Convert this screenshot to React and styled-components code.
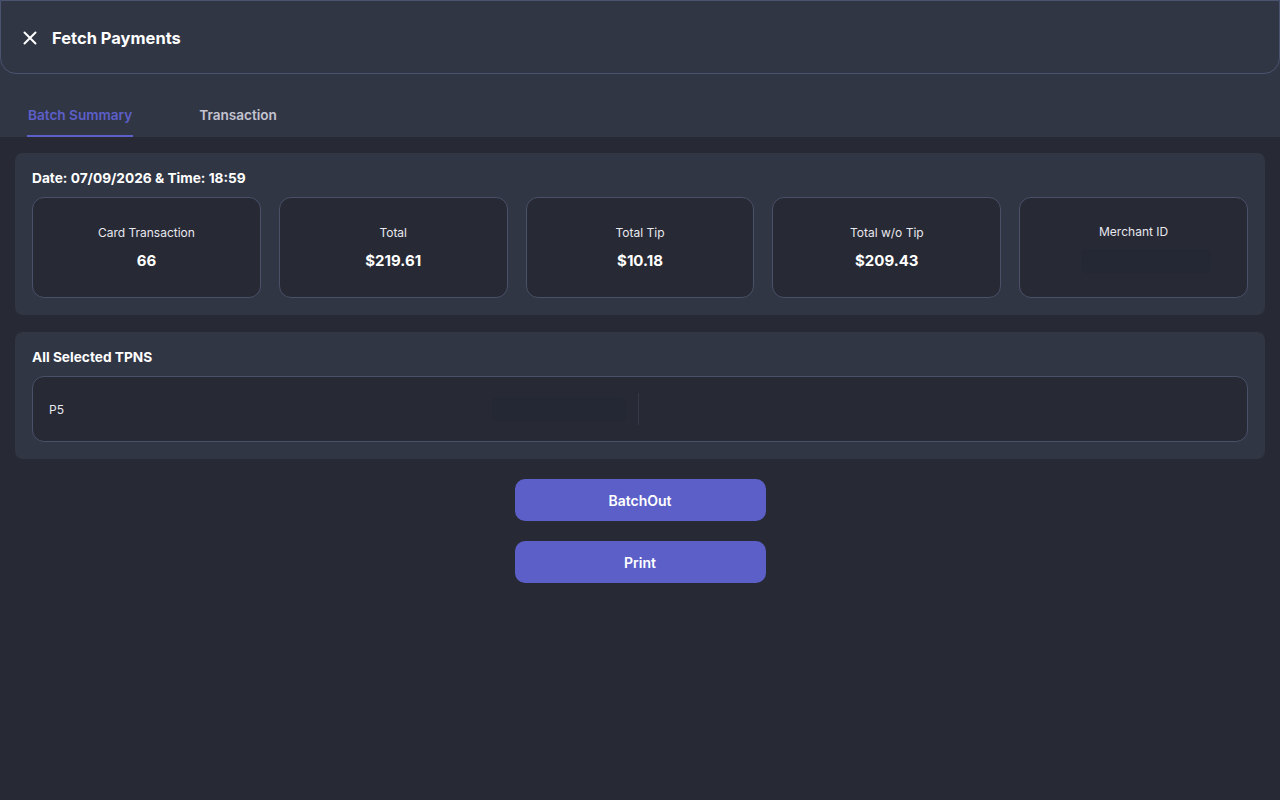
import React, { useState } from "react";
import styled, { createGlobalStyle } from "styled-components";

const GlobalStyle = createGlobalStyle`
  html, body {
    margin: 0;
    padding: 0;
    background: #272934;
    font-family: Inter, "Noto Sans", sans-serif;
    color: #ffffff;
  }
  * { box-sizing: border-box; }
`;

const stats = [
  { label: "Card Transaction", value: "66" },
  { label: "Total", value: "$219.61" },
  { label: "Total Tip", value: "$10.18" },
  { label: "Total w/o Tip", value: "$209.43" },
  { label: "Merchant ID", value: null },
];

function App() {
  const [tab, setTab] = useState("summary");

  return (
    <Page>
      <GlobalStyle />
      <TopArea>
        <Header>
          <CloseButton aria-label="close">
            <svg width="16" height="16" viewBox="0 0 16 16">
              <path d="M2.5 2.5 L13.5 13.5 M13.5 2.5 L2.5 13.5" stroke="#fff" strokeWidth="2" strokeLinecap="round" />
            </svg>
          </CloseButton>
          <Title>Fetch Payments</Title>
        </Header>
        <Tabs>
          <Tab active={tab === "summary"} onClick={() => setTab("summary")}>
            Batch Summary
          </Tab>
          <Tab active={tab === "transaction"} onClick={() => setTab("transaction")}>
            Transaction
          </Tab>
        </Tabs>
      </TopArea>

      <Content>
        <Panel>
          <PanelTitle>Date: 07/09/2026 &amp; Time: 18:59</PanelTitle>
          <StatGrid>
            {stats.map((s) => (
              <StatBox key={s.label}>
                <StatLabel>{s.label}</StatLabel>
                {s.value ? <StatValue>{s.value}</StatValue> : <Skeleton width={130} offset={24} />}
              </StatBox>
            ))}
          </StatGrid>
        </Panel>

        <Panel>
          <PanelTitle>All Selected TPNS</PanelTitle>
          <TpnRow>
            <TpnName>P5</TpnName>
            <TpnMid>
              <Skeleton width={134} />
              <Divider />
            </TpnMid>
          </TpnRow>
        </Panel>

        <Actions>
          <PrimaryButton>BatchOut</PrimaryButton>
          <PrimaryButton>Print</PrimaryButton>
        </Actions>
      </Content>
    </Page>
  );
}

const Page = styled.div`
  min-height: 800px;
  background: #272934;
`;

const TopArea = styled.div`
  background: #313645;
`;

const Header = styled.header`
  height: 74px;
  display: flex;
  align-items: center;
  gap: 14px;
  padding: 2px 20px 0 21px;
  border: 1px solid #4a5370;
  border-radius: 0 0 16px 16px;
`;

const CloseButton = styled.button`
  background: none;
  border: none;
  padding: 0;
  width: 16px;
  height: 16px;
  display: flex;
  cursor: pointer;
`;

const Title = styled.h1`
  margin: 0;
  font-size: 16.5px;
  font-weight: 700;
  color: #ffffff;
`;

const Tabs = styled.nav`
  display: flex;
  gap: 65px;
  padding: 0 27px;
  height: 63px;
  align-items: flex-end;
`;

const Tab = styled.button`
  background: none;
  border: none;
  padding: 0 1px 12px;
  font-family: inherit;
  font-size: 13.6px;
  font-weight: 600;
  color: ${(p) => (p.active ? "#5d5fc9" : "#c4c4d0")};
  border-bottom: 2px solid ${(p) => (p.active ? "#5d5fc9" : "transparent")};
  cursor: pointer;
`;

const Content = styled.main`
  padding: 16px 15px;
  display: flex;
  flex-direction: column;
  gap: 17px;
`;

const Panel = styled.section`
  background: #313645;
  border-radius: 8px;
  padding: 16px 17px 17px;
  display: flex;
  flex-direction: column;
  gap: 10px;
`;

const PanelTitle = styled.h2`
  margin: 0;
  font-size: 13.7px;
  font-weight: 700;
  color: #ffffff;
  line-height: 18px;
`;

const StatGrid = styled.div`
  display: grid;
  grid-template-columns: repeat(5, 1fr);
  gap: 18px;
`;

const StatBox = styled.div`
  height: 101px;
  background: #272934;
  border: 1px solid #4a5068;
  border-radius: 12px;
  display: flex;
  flex-direction: column;
  align-items: center;
  justify-content: center;
  gap: 10px;
  padding-top: 2px;
`;

const StatLabel = styled.span`
  font-size: 12px;
  color: #e8e8ee;
`;

const StatValue = styled.span`
  font-size: 15px;
  font-weight: 700;
  color: #ffffff;
  line-height: 22px;
`;

const Skeleton = styled.div`
  width: ${(p) => p.width}px;
  height: 24px;
  margin-left: ${(p) => p.offset || 0}px;
  border-radius: 6px;
  background: #232834;
`;

const TpnRow = styled.div`
  height: 66px;
  background: #272934;
  border: 1px solid #4a5068;
  border-radius: 12px;
  display: flex;
  align-items: center;
  padding: 0 16px;
`;

const TpnName = styled.span`
  font-size: 12px;
  color: #e8e8ee;
  width: 443px;
`;

const TpnMid = styled.div`
  display: flex;
  align-items: center;
  gap: 12px;
`;

const Divider = styled.div`
  width: 1px;
  height: 32px;
  background: #363a48;
`;

const Actions = styled.div`
  display: flex;
  flex-direction: column;
  align-items: center;
  gap: 20px;
  padding-top: 3px;
`;

const PrimaryButton = styled.button`
  width: 251px;
  height: 42px;
  border: none;
  border-radius: 10px;
  background: #5c5fc8;
  color: #ffffff;
  font-family: inherit;
  font-size: 14px;
  font-weight: 600;
  cursor: pointer;
`;

export default App;
